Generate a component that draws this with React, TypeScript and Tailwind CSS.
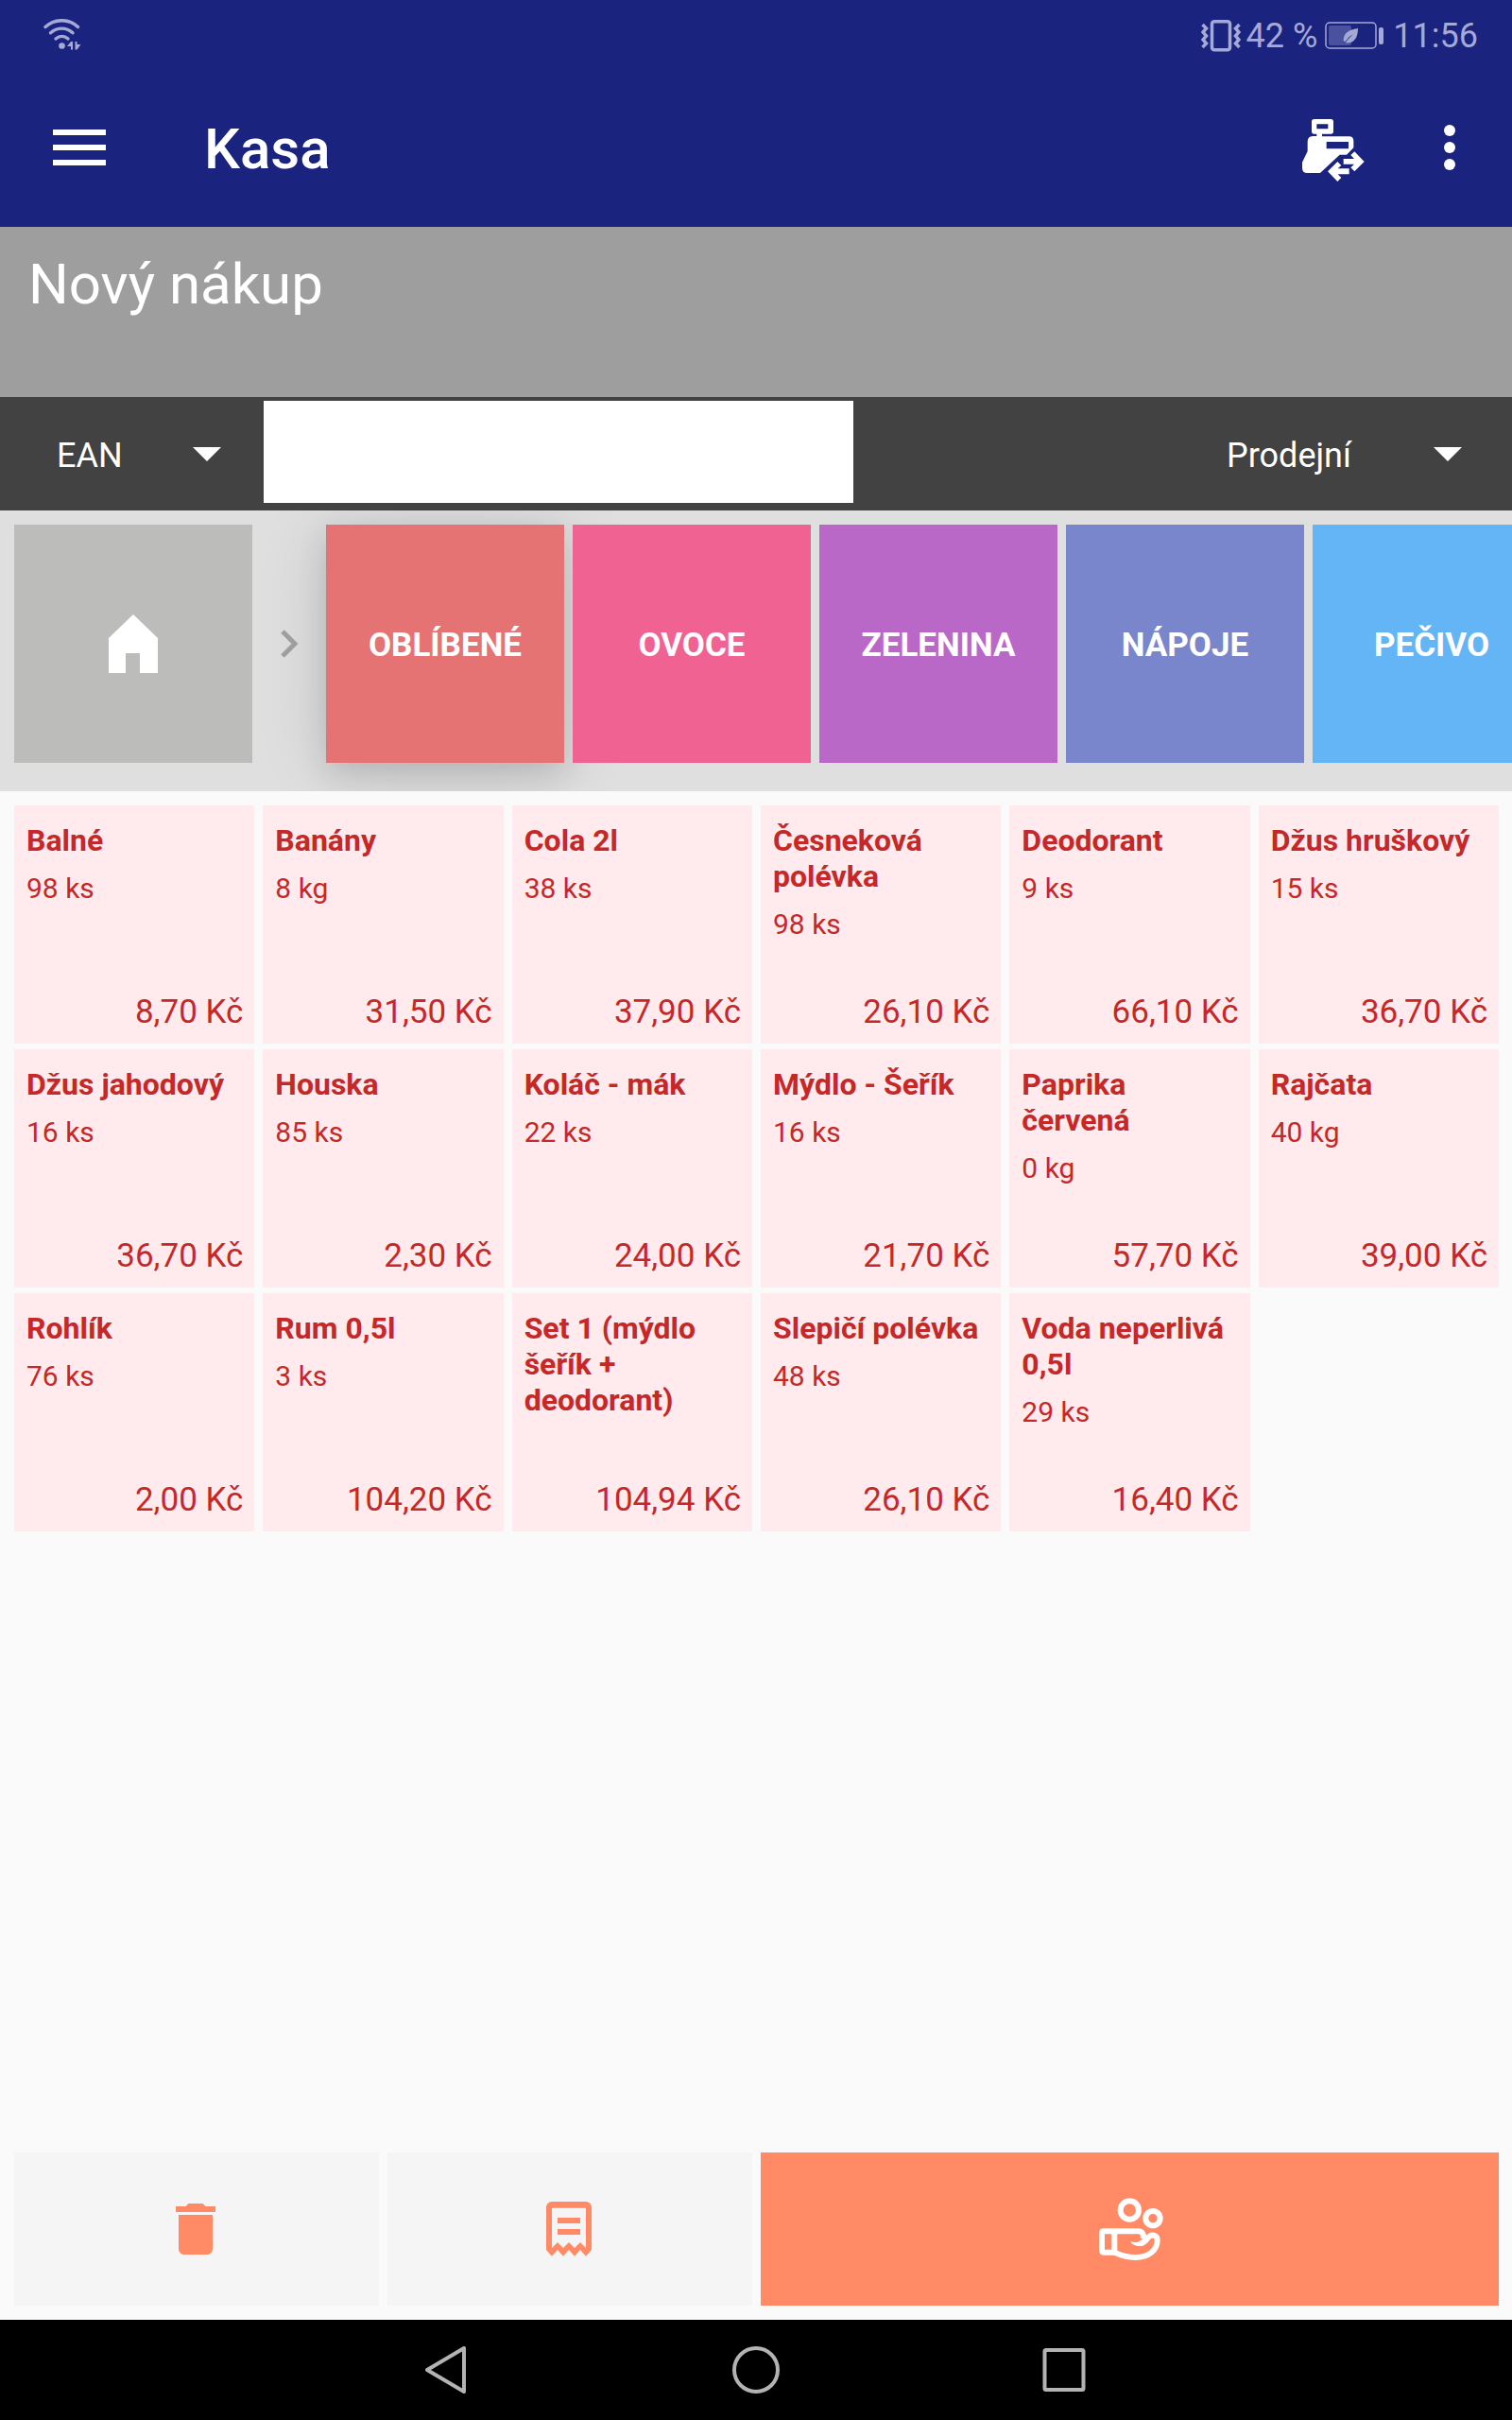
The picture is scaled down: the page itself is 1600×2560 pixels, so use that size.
import { useState } from 'react';

type Category = { name: string; color: string; raised?: boolean };
type Product = { name: string; stock?: string; price: string };

const CATEGORIES: Category[] = [
    { name: 'OBLÍBENÉ', color: 'bg-[#e57373]', raised: true },
    { name: 'OVOCE', color: 'bg-[#f06292]' },
    { name: 'ZELENINA', color: 'bg-[#ba68c8]' },
    { name: 'NÁPOJE', color: 'bg-[#7986cb]' },
    { name: 'PEČIVO', color: 'bg-[#64b5f6]' },
];

const PRODUCTS: Product[] = [
    { name: 'Balné', stock: '98 ks', price: '8,70 Kč' },
    { name: 'Banány', stock: '8 kg', price: '31,50 Kč' },
    { name: 'Cola 2l', stock: '38 ks', price: '37,90 Kč' },
    { name: 'Česneková polévka', stock: '98 ks', price: '26,10 Kč' },
    { name: 'Deodorant', stock: '9 ks', price: '66,10 Kč' },
    { name: 'Džus hruškový', stock: '15 ks', price: '36,70 Kč' },
    { name: 'Džus jahodový', stock: '16 ks', price: '36,70 Kč' },
    { name: 'Houska', stock: '85 ks', price: '2,30 Kč' },
    { name: 'Koláč - mák', stock: '22 ks', price: '24,00 Kč' },
    { name: 'Mýdlo - Šeřík', stock: '16 ks', price: '21,70 Kč' },
    { name: 'Paprika červená', stock: '0 kg', price: '57,70 Kč' },
    { name: 'Rajčata', stock: '40 kg', price: '39,00 Kč' },
    { name: 'Rohlík', stock: '76 ks', price: '2,00 Kč' },
    { name: 'Rum 0,5l', stock: '3 ks', price: '104,20 Kč' },
    { name: 'Set 1 (mýdlo šeřík + deodorant)', price: '104,94 Kč' },
    { name: 'Slepičí polévka', stock: '48 ks', price: '26,10 Kč' },
    { name: 'Voda neperlivá 0,5l', stock: '29 ks', price: '16,40 Kč' },
];

function WifiIcon() {
    return (
        <svg width="42" height="36" viewBox="0 0 42 36" fill="none" stroke="currentColor" strokeWidth="3.4" strokeLinecap="round">
            <path d="M3 8.500C13-.6 28-.6 37.500 8.500" />
            <path d="M8.500 14.800C15.500 8.600 25 8.600 32 14.800" />
            <path d="M14 21C18 17.600 23 17.600 27 21" />
            <circle cx="20.500" cy="28.500" r="3.300" fill="currentColor" stroke="none" />
            <path d="M26 29l4-5h2v8.500h-2V29zM34.500 24h2v3h4l-4 5.500h-2z" fill="currentColor" stroke="none" />
        </svg>
    );
}

function VibrateIcon() {
    return (
        <svg width="42" height="34" viewBox="0 0 42 34" fill="none" stroke="currentColor" strokeWidth="3.5">
            <rect x="11.500" y="1.800" width="19" height="30" rx="2.500" />
            <path d="M1.500 5l4 4-3.500 4 3.500 4-3.500 4 3.500 4-4 4" />
            <path d="M40.500 5l-4 4 3.500 4-3.500 4 3.500 4-3.500 4 4 4" />
        </svg>
    );
}

function BatteryIcon() {
    return (
        <svg width="62" height="30" viewBox="0 0 62 30" fill="none">
            <rect x="1" y="1" width="53" height="27" rx="4" stroke="currentColor" strokeWidth="1.500" />
            <rect x="4" y="4" width="24" height="21" rx="2" fill="currentColor" opacity=".35" />
            <rect x="57" y="6" width="5" height="18" rx="2" fill="currentColor" />
            <path d="M35 7C27 8 21 11 20 17l-.500 3 2 1 4-5 4-2.500-6 6.500-1.500 2.500C31 23 35 17 35 7z" fill="currentColor" />
        </svg>
    );
}

function RegisterIcon() {
    return (
        <svg width="90" height="90" viewBox="0 0 270 270" fill="currentColor">
            <path
                fillRule="evenodd"
                d="M62 33h53q8 0 8 8v31q0 8-8 8H87v8h86q14 0 14 14v22l-22 22h-22l-62 58H40q-16 0-16-16v-18l17-35v-30q0-18 17-18h12v-7h-8q-8 0-8-8V41q0-8 8-8zm8 16v15h36V49zm31 56v22h70v-22z"
            />
            <path d="M178 147l12-11 31 32-31 31-12-12 11-11h-34v-17h34z" />
            <path d="M105 199l31-31 12 12-11 10h36v18h-36l11 11-12 12z" />
        </svg>
    );
}

function TrashIcon() {
    return (
        <svg width="72" height="72" viewBox="0 0 24 24" fill="currentColor">
            <path d="M6 19c0 1.100.900 2 2 2h8c1.100 0 2-.900 2-2V7H6v12zM19 4h-3.500l-1-1h-5l-1 1H5v2h14V4z" />
        </svg>
    );
}

function ReceiptIcon() {
    return (
        <svg width="72" height="72" viewBox="0 0 24 24" fill="currentColor">
            <path
                fillRule="evenodd"
                d="M6 2.300h12a2 2 0 0 1 2 2v15l-2 2.300-2-2.300-2 2.300-2-2.300-2 2.300-2-2.300-2 2.300-2-2.300v-15a2 2 0 0 1 2-2zM6 4.600v14.100l2-2 2 2 2-2 2 2 2-2 2 2V4.600z"
            />
            <path d="M8 8h8v2H8zM8 12h8v2H8z" />
        </svg>
    );
}

function PayIcon() {
    return (
        <svg width="110" height="100" viewBox="0 -4 330 300" fill="none" stroke="currentColor" strokeWidth="18" strokeLinejoin="round">
            <circle cx="163" cy="86" r="29" />
            <circle cx="237" cy="112" r="23" />
            <path d="M115 153H81q-6 0-6 7v53q0 7 6 7h34z" />
            <path d="M115 153h75c14 0 20 12 15 24" />
            <path d="M115 220c20 10 42 16 66 16 44 0 70-24 70-54 0-17-19-22-29-9-8 11-15 18-26 19" />
            <path d="M166 186c11 3 21 3 29-1 8-4 11-10 13-17l14 12c-8 13-16 20-28 20-13 0-23-4-28-14z" fill="currentColor" stroke="none" />
        </svg>
    );
}

function Spinner({ label, value, className }: { label: string; value: string; className: string }) {
    return (
        <div className={`relative flex items-center ${className}`}>
            <select aria-label={label} className="h-full w-full appearance-none bg-transparent pt-1 pl-15 text-[36px] text-white outline-none">
                <option>{value}</option>
            </select>
            <svg className="pointer-events-none absolute right-[45px]" width="30" height="15" viewBox="0 0 30 15" fill="white">
                <path d="M0 0h30L15 15z" />
            </svg>
        </div>
    );
}

function ProductCard({ product }: { product: Product }) {
    return (
        <button className="flex h-[252px] flex-col bg-[#ffebee] pt-[18px] pr-3 pb-3 pl-[13px] text-left text-[#c62828]">
            <span className="text-[32px] leading-[38px] font-bold">{product.name}</span>
            {product.stock && <span className="mt-[13px] text-[30px] leading-[38px]">{product.stock}</span>}
            <span className="mt-auto self-end text-[35px] leading-[42px]">{product.price}</span>
        </button>
    );
}

export default function App() {
    const [code, setCode] = useState('');

    return (
        <div className="flex min-h-screen flex-col bg-[#fafafa] font-['Roboto',sans-serif]">
            <header className="bg-[#1a237e] text-white">
                <div className="flex h-[72px] items-center justify-between pt-[3px] pr-9 pl-[45px] text-[#a5a9d6]">
                    <WifiIcon />
                    <div className="flex items-center text-[36px]">
                        <VibrateIcon />
                        <span className="ml-[6px]">42 %</span>
                        <span className="mr-[10px] ml-2">
                            <BatteryIcon />
                        </span>
                        <span>11:56</span>
                    </div>
                </div>
                <div className="flex h-[168px] items-center pr-[60px] pl-14">
                    <button aria-label="Menu" className="flex flex-col gap-[10px]">
                        <span className="h-[6px] w-14 bg-white" />
                        <span className="h-[6px] w-14 bg-white" />
                        <span className="h-[6px] w-14 bg-white" />
                    </button>
                    <h1 className="ml-[104px] flex-1 pt-1 text-[60px] font-medium">Kasa</h1>
                    <button aria-label="Pokladna" className="mr-[68px] pt-2">
                        <RegisterIcon />
                    </button>
                    <button aria-label="Další možnosti" className="flex flex-col gap-[6px]">
                        <span className="size-3 rounded-full bg-white" />
                        <span className="size-3 rounded-full bg-white" />
                        <span className="size-3 rounded-full bg-white" />
                    </button>
                </div>
            </header>

            <section className="h-[180px] bg-[#9e9e9e] px-[30px] pt-[26px]">
                <h2 className="text-[60px] leading-[70px] text-white">Nový nákup</h2>
            </section>

            <div className="flex h-[120px] bg-[#424242]">
                <Spinner label="Typ kódu" value="EAN" className="w-[279px]" />
                <input
                    aria-label="Kód zboží"
                    value={code}
                    onChange={(e) => setCode(e.target.value)}
                    className="mt-1 h-[108px] w-[39%] bg-white px-4 text-[36px] text-black outline-none"
                />
                <Spinner label="Cenová hladina" value="Prodejní" className="mr-2 ml-auto w-[354px]" />
            </div>

            <nav className="flex h-[297px] overflow-hidden bg-[#dfdfdf] pt-[15px] pl-[15px]">
                <button aria-label="Domů" className="z-10 flex size-[252px] shrink-0 items-center justify-center bg-[#bcbcba]">
                    <svg width="52" height="62" viewBox="0 0 52 62" fill="white">
                        <path d="M26 0l26 25v37H33V41H18v21H0V25z" />
                    </svg>
                </button>
                <div className="z-10 flex h-[252px] w-[78px] shrink-0 items-center justify-center">
                    <svg width="20" height="30" viewBox="0 0 20 30" fill="none" stroke="#9e9e9e" strokeWidth="5">
                        <path d="M3 2l13 13L3 28" />
                    </svg>
                </div>
                <div className="flex gap-[9px]">
                    {CATEGORIES.map((category) => (
                        <button
                            key={category.name}
                            className={`size-[252px] shrink-0 pt-[5px] text-[35px] font-bold text-white ${category.color} ${
                                category.raised ? 'shadow-[0_12px_30px_rgba(0,0,0,0.12),0_6px_72px_rgba(0,0,0,0.12)]' : 'relative'
                            }`}
                        >
                            {category.name}
                        </button>
                    ))}
                </div>
            </nav>

            <main className="flex-1 pt-[15px] pr-[14px] pl-[15px]">
                <div className="grid grid-cols-6 gap-x-[9px] gap-y-[6px]">
                    {PRODUCTS.map((product) => (
                        <ProductCard key={product.name} product={product} />
                    ))}
                </div>
            </main>

            <div className="grid grid-cols-4 gap-[9px] py-[15px] pr-[14px] pl-[15px] text-[#ff8a65]">
                <button aria-label="Smazat" className="flex h-[162px] items-center justify-center bg-[#f5f5f5] pr-[3px]">
                    <TrashIcon />
                </button>
                <button aria-label="Účtenka" className="flex h-[162px] items-center justify-center bg-[#f5f5f5] pr-[3px]">
                    <ReceiptIcon />
                </button>
                <button aria-label="Zaplatit" className="col-span-2 flex h-[162px] items-center justify-center bg-[#ff8a65] text-white">
                    <PayIcon />
                </button>
            </div>

            <footer className="flex h-[106px] items-center justify-center gap-[276px] bg-black text-[#b3b3b3]">
                <button aria-label="Zpět">
                    <svg width="50" height="52" viewBox="0 0 50 52" fill="none" stroke="currentColor" strokeWidth="4" strokeLinejoin="round">
                        <path d="M42 3v46L3 26z" />
                    </svg>
                </button>
                <button aria-label="Domovská obrazovka">
                    <svg width="50" height="52" viewBox="0 0 50 52" fill="none" stroke="currentColor" strokeWidth="4">
                        <circle cx="25" cy="26" r="23" />
                    </svg>
                </button>
                <button aria-label="Poslední aplikace">
                    <svg width="50" height="52" viewBox="0 0 50 52" fill="none" stroke="currentColor" strokeWidth="4">
                        <rect x="4.500" y="5" width="41" height="42" rx="1.500" />
                    </svg>
                </button>
            </footer>
        </div>
    );
}
